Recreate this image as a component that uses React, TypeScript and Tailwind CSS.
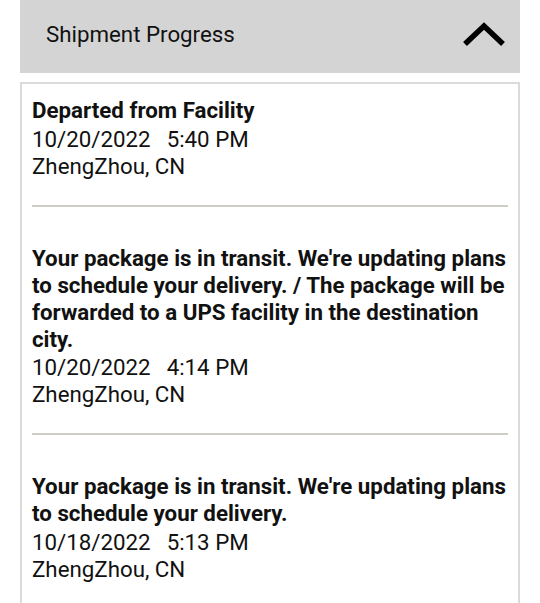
import React from "react";

const items = [
  {
    title: "Departed from Facility",
    date: "10/20/2022",
    time: "5:40 PM",
    place: "ZhengZhou, CN",
  },
  {
    title:
      "Your package is in transit. We're updating plans to schedule your delivery. / The package will be forwarded to a UPS facility in the destination city.",
    date: "10/20/2022",
    time: "4:14 PM",
    place: "ZhengZhou, CN",
  },
  {
    title:
      "Your package is in transit. We're updating plans to schedule your delivery.",
    date: "10/18/2022",
    time: "5:13 PM",
    place: "ZhengZhou, CN",
  },
];

export default function App() {
  return (
    <div
      className="w-[540px] h-[603px] overflow-hidden bg-white text-black"
      style={{ fontFamily: "Roboto, 'Liberation Sans', sans-serif" }}
    >
      <div className="mx-[20px] h-[73px] bg-[#d4d4d4] flex items-center justify-between pl-[26px] pr-[13px] pb-[4px]">
        <span className="text-[22.3px] text-[#111]">Shipment Progress</span>
        <svg width="46" height="30" viewBox="0 0 46 30">
          <path
            d="M4 24 L23 6 L42 24"
            fill="none"
            stroke="#000"
            strokeWidth="5.5"
          />
        </svg>
      </div>
      <div className="mx-[20px] mt-[9px] border-2 border-[#dadada] bg-white px-[10px] pt-[13px] pb-[40px]">
        {items.map((it, i) => (
          <div key={i}>
            {i > 0 && <div className="h-[38px]" />}
            <div className="text-[22.3px] leading-[27px] font-bold text-[#111]">
              {it.title}
            </div>
            <div className="mt-[1.5px] text-[22.3px] leading-[27px] text-[#111]">
              {it.date}
              <span className="ml-[16px]">{it.time}</span>
            </div>
            <div className="text-[22.3px] leading-[27px] text-[#111]">{it.place}</div>
            <div className="mt-[25px] h-[2px] bg-[#cfccc5]" />
          </div>
        ))}
      </div>
    </div>
  );
}
